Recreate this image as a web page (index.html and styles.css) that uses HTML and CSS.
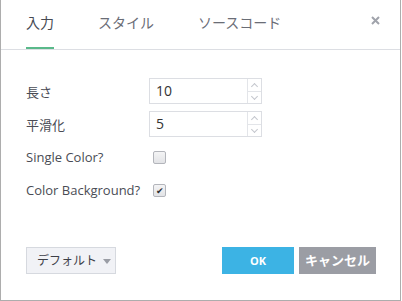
FILE: index.html
```html
<!DOCTYPE html>
<html lang="ja">
<head>
    <meta charset="UTF-8">
    <title>入力</title>
    <link rel="stylesheet" href="styles.css">
</head>
<body>
    <div class="dialog">
        <div class="tabs">
            <span class="tab active">入力</span>
            <span class="tab">スタイル</span>
            <span class="tab">ソースコード</span>
            <span class="close">
                <svg width="9" height="9" viewBox="0 0 9 9"><path d="M1 1L8 8M8 1L1 8" stroke="#a0a3ab" stroke-width="2"/></svg>
            </span>
        </div>
        <div class="content">
            <div class="row">
                <span class="label">長さ</span>
                <div class="spin">
                    <span class="spin-value">10</span>
                    <div class="spin-btns">
                        <span class="arrow up"></span>
                        <span class="arrow down"></span>
                    </div>
                </div>
            </div>
            <div class="row">
                <span class="label">平滑化</span>
                <div class="spin">
                    <span class="spin-value">5</span>
                    <div class="spin-btns">
                        <span class="arrow up"></span>
                        <span class="arrow down"></span>
                    </div>
                </div>
            </div>
            <div class="row">
                <span class="label">Single Color?</span>
                <span class="check"></span>
            </div>
            <div class="row">
                <span class="label">Color Background?</span>
                <span class="check checked">&#10004;</span>
            </div>
        </div>
        <div class="footer">
            <span class="btn-default">デフォルト<span class="caret"></span></span>
            <span class="btn ok">OK</span>
            <span class="btn cancel">キャンセル</span>
        </div>
    </div>
</body>
</html>
```

FILE: styles.css
```css
body {
    margin: 0;
    background-color: #fff;
    font-family: "Open Sans", "Noto Sans CJK JP", sans-serif;
    color: #4a4c55;
}
.dialog {
    width: 401px;
    height: 301px;
    box-sizing: border-box;
    border: 1px solid #adadad;
    border-top: none;
    display: flex;
    flex-direction: column;
}
.tabs {
    height: 50px;
    box-sizing: border-box;
    border-bottom: 1px solid #dcdee3;
    display: flex;
    align-items: stretch;
    padding-left: 25px;
    padding-right: 20px;
}
.tab {
    font-size: 14px;
    line-height: 46px;
    margin-right: 44px;
    color: #6a6d76;
    border-bottom: 2px solid transparent;
}
.tab.active {
    color: #474a53;
    border-bottom-color: #5ab98a;
}
.close {
    margin-left: auto;
    padding-top: 16px;
}
.close svg {
    display: block;
}
.content {
    padding: 28px 0 0 25px;
    display: flex;
    flex-direction: column;
    gap: 7px;
}
.row {
    display: flex;
    align-items: center;
    height: 26px;
}
.label {
    width: 123px;
    font-size: 13px;
    color: #4a4c55;
}
.spin {
    width: 113px;
    height: 26px;
    box-sizing: border-box;
    border: 1px solid #dcdee3;
    display: flex;
}
.spin-value {
    flex: 1;
    padding-left: 6px;
    font-size: 14px;
    line-height: 24px;
    color: #333;
}
.spin-btns {
    width: 13px;
    border-left: 1px solid #e3e5e9;
    display: flex;
    flex-direction: column;
}
.arrow {
    flex: 1;
    position: relative;
}
.arrow.up {
    border-bottom: 1px solid #e3e5e9;
}
.arrow::after {
    content: "";
    position: absolute;
    left: 4px;
    width: 4px;
    height: 4px;
    border-left: 1px solid #c4c7cd;
    border-top: 1px solid #c4c7cd;
}
.arrow.up::after {
    top: 5px;
    transform: rotate(45deg);
}
.arrow.down::after {
    top: 2px;
    transform: rotate(225deg);
}
.check {
    width: 11px;
    height: 11px;
    margin-left: 4px;
    border: 1px solid #b3b5bb;
    border-radius: 2px;
    background: linear-gradient(#f4f4f5, #e2e3e6);
    font-size: 9px;
    line-height: 11px;
    text-align: center;
    color: #2c2e33;
}
.footer {
    margin-top: auto;
    padding: 0 24px 26px 25px;
    display: flex;
    align-items: center;
}
.btn-default {
    width: 90px;
    height: 27px;
    box-sizing: border-box;
    border: 1px solid #d6d9df;
    background-color: #f1f2f6;
    font-size: 12px;
    line-height: 25px;
    padding-left: 10px;
    white-space: nowrap;
    color: #3d4048;
}
.caret {
    display: inline-block;
    margin-left: 6px;
    border-left: 4px solid transparent;
    border-right: 4px solid transparent;
    border-top: 5px solid #9a9da5;
    vertical-align: middle;
}
.btn {
    height: 27px;
    line-height: 27px;
    text-align: center;
    color: #fff;
    font-weight: bold;
}
.ok {
    margin-left: auto;
    width: 72px;
    background-color: #3cb3e4;
    font-size: 11px;
}
.cancel {
    margin-left: 5px;
    width: 77px;
    background-color: #9b9da4;
    font-size: 13px;
}
```
